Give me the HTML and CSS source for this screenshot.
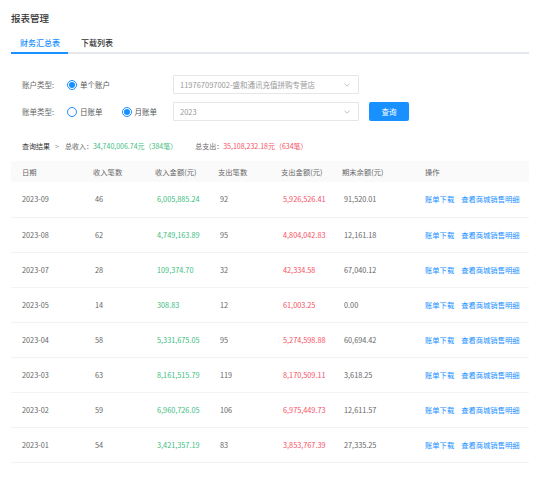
FILE: index.html
```html
<!DOCTYPE html>
<html lang="zh-CN">
<head>
<meta charset="utf-8">
<title>报表管理</title>
<link rel="stylesheet" href="styles.css">
</head>
<body>
<div class="page">
  <h1 class="title">报表管理</h1>
  <div class="tabs">
    <div class="tab active">财务汇总表</div>
    <div class="tab">下载列表</div>
  </div>
  <div class="form">
    <div class="row">
      <span class="label">账户类型:</span>
      <div class="opts">
        <label class="radio"><span class="dot on"></span>单个账户</label>
      </div>
      <div class="select"><span>119767097002-盛和通讯充值拼购专营店</span><svg width="6" height="4" viewBox="0 0 6 4"><path d="M0.5 0.6 L3 3.2 L5.5 0.6" stroke="#b5b5b5" stroke-width="0.8" fill="none"/></svg></div>
    </div>
    <div class="row">
      <span class="label">账单类型:</span>
      <div class="opts">
        <label class="radio"><span class="dot"></span>日账单</label>
        <label class="radio"><span class="dot on"></span>月账单</label>
      </div>
      <div class="select"><span>2023</span><svg width="6" height="4" viewBox="0 0 6 4"><path d="M0.5 0.6 L3 3.2 L5.5 0.6" stroke="#b5b5b5" stroke-width="0.8" fill="none"/></svg></div>
      <button class="btn">查询</button>
    </div>
  </div>
  <div class="summary">
    <span class="crumb">查询结果</span><span class="sep">&gt;</span><span class="key">总收入：</span><span class="in">34,740,006.74元（384笔）</span><span class="key out-key">总支出：</span><span class="out">35,108,232.18元（634笔）</span>
  </div>
  <table class="grid">
    <colgroup>
      <col style="width:71px"><col style="width:62px"><col style="width:63px"><col style="width:63px"><col style="width:61px"><col style="width:83px"><col>
    </colgroup>
    <thead>
      <tr><th>日期</th><th>收入笔数</th><th>收入金额(元)</th><th>支出笔数</th><th>支出金额(元)</th><th>期末余额(元)</th><th>操作</th></tr>
    </thead>
    <tbody>
      <tr><td>2023-09</td><td class="n">46</td><td class="n in">6,005,885.24</td><td class="n">92</td><td class="n out">5,926,526.41</td><td class="n">91,520.01</td><td class="ops"><a>账单下载</a><a>查看商城销售明细</a></td></tr>
      <tr><td>2023-08</td><td class="n">62</td><td class="n in">4,749,163.89</td><td class="n">95</td><td class="n out">4,804,042.83</td><td class="n">12,161.18</td><td class="ops"><a>账单下载</a><a>查看商城销售明细</a></td></tr>
      <tr><td>2023-07</td><td class="n">28</td><td class="n in">109,374.70</td><td class="n">32</td><td class="n out">42,334.58</td><td class="n">67,040.12</td><td class="ops"><a>账单下载</a><a>查看商城销售明细</a></td></tr>
      <tr><td>2023-05</td><td class="n">14</td><td class="n in">308.83</td><td class="n">12</td><td class="n out">61,003.25</td><td class="n">0.00</td><td class="ops"><a>账单下载</a><a>查看商城销售明细</a></td></tr>
      <tr><td>2023-04</td><td class="n">58</td><td class="n in">5,331,675.05</td><td class="n">95</td><td class="n out">5,274,598.88</td><td class="n">60,694.42</td><td class="ops"><a>账单下载</a><a>查看商城销售明细</a></td></tr>
      <tr><td>2023-03</td><td class="n">63</td><td class="n in">8,161,515.79</td><td class="n">119</td><td class="n out">8,170,509.11</td><td class="n">3,618.25</td><td class="ops"><a>账单下载</a><a>查看商城销售明细</a></td></tr>
      <tr><td>2023-02</td><td class="n">59</td><td class="n in">6,960,726.05</td><td class="n">106</td><td class="n out">6,975,449.73</td><td class="n">12,611.57</td><td class="ops"><a>账单下载</a><a>查看商城销售明细</a></td></tr>
      <tr><td>2023-01</td><td class="n">54</td><td class="n in">3,421,357.19</td><td class="n">83</td><td class="n out">3,853,767.39</td><td class="n">27,335.25</td><td class="ops"><a>账单下载</a><a>查看商城销售明细</a></td></tr>
    </tbody>
  </table>
</div>
</body>
</html>
```
FILE: styles.css
```css
* { box-sizing: border-box; }
body {
  margin: 0;
  background: #fff;
  color: #666;
  font-family: "Noto Sans CJK SC", "Noto Sans", sans-serif;
}
.page { padding: 0 21px 0 11px; }
.title {
  margin: 0;
  padding-top: 12px;
  height: 33px;
  font-size: 9.5px;
  line-height: 12px;
  font-weight: 500;
  color: #333;
}
.tabs {
  display: flex;
  height: 21px;
  border-bottom: 2px solid #e4e7ed;
}
.tab {
  font-size: 8px;
  line-height: 19px;
  color: #333;
  font-weight: 500;
}
.tab.active {
  color: #1890ff;
  height: 21px;
  padding: 0 8px 0 9px;
  border-bottom: 2px solid #1890ff;
}
.tab + .tab { margin-left: 13px; }

.form {
  margin-top: 21px;
  padding-left: 11px;
  display: flex;
  flex-direction: column;
  gap: 8px;
}
.row {
  display: flex;
  align-items: center;
  height: 19px;
}
.label {
  width: 45px;
  flex-shrink: 0;
  font-size: 7.5px;
  color: #666;
}
.opts {
  width: 106px;
  flex-shrink: 0;
  display: flex;
  align-items: center;
}
.radio {
  display: flex;
  align-items: center;
  flex-shrink: 0;
  white-space: nowrap;
  font-size: 7.5px;
  color: #555;
  margin-right: 19px;
}
.radio:last-child { margin-right: 0; }
.dot {
  width: 10px;
  height: 10px;
  flex-shrink: 0;
  border: 1px solid #1890ff;
  border-radius: 50%;
  margin-right: 3px;
  display: flex;
  align-items: center;
  justify-content: center;
  background: #fff;
}
.dot.on::after {
  content: "";
  width: 6px;
  height: 6px;
  border-radius: 50%;
  background: #1890ff;
}
.select {
  width: 186px;
  height: 19px;
  flex-shrink: 0;
  border: 1px solid #e6e6e6;
  border-radius: 1px;
  display: flex;
  align-items: center;
  justify-content: space-between;
  padding: 0 8px 0 6px;
  font-size: 7.5px;
  color: #999;
  white-space: nowrap;
}
.btn {
  margin-left: 10px;
  width: 40px;
  height: 19px;
  flex-shrink: 0;
  border: 0;
  border-radius: 2px;
  background: #1890ff;
  color: #fff;
  font-family: inherit;
  font-size: 7.5px;
  padding: 0;
}

.summary {
  margin-top: 19px;
  padding-left: 11px;
  font-size: 7px;
  line-height: 12px;
  white-space: nowrap;
}
.crumb { color: #333; }
.sep { color: #999; margin: 0 6px 0 5px; }
.key { color: #666; }
.in { color: #3dbd80; }
.out { color: #f5505f; }
.out-key { margin-left: 18px; }

.grid {
  margin-top: 9px;
  width: 518px;
  border-collapse: collapse;
  table-layout: fixed;
  font-size: 7.3px;
}
.grid th {
  height: 21px;
  padding: 0 0 0 11px;
  background: #fafafa;
  font-weight: normal;
  text-align: left;
  color: #666;
}
.grid td {
  height: 35px;
  padding: 0 0 0 11px;
  border-bottom: 1px solid #f3f3f3;
  color: #666;
  white-space: nowrap;
}
.grid td.n { padding-left: 13px; }
.grid td.in { color: #3dbd80; }
.grid td.out { color: #f5505f; }
.ops a { color: #1890ff; cursor: pointer; }
.ops a + a { margin-left: 7px; }
```
